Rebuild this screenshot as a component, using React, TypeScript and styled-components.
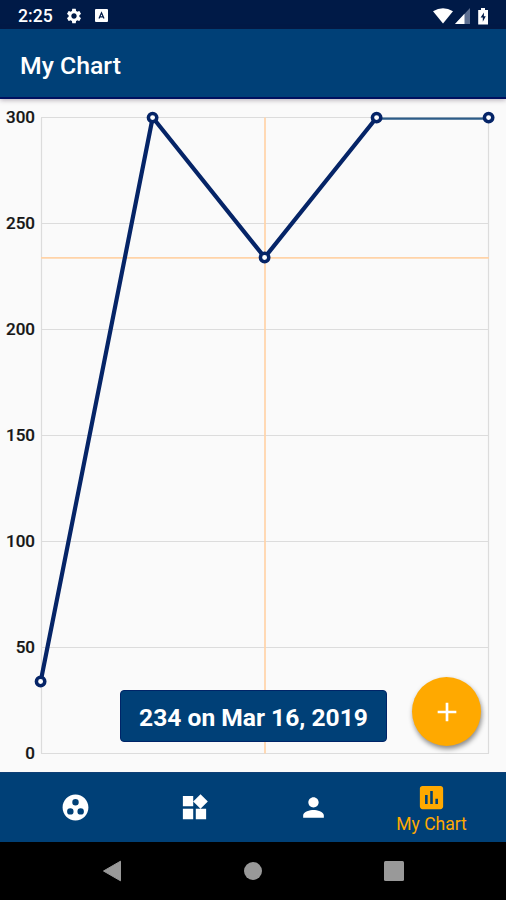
import React from 'react';
import styled, { createGlobalStyle } from 'styled-components';
import { MdAdd, MdGroupWork, MdInsertChart, MdPerson, MdSettings, MdWidgets } from 'react-icons/md';

const GlobalStyle = createGlobalStyle`
  * { box-sizing: border-box; }
  body { margin: 0; background: #000; font-family: Roboto, sans-serif; }
  svg { display: block; flex: none; }
`;

const Screen = styled.div`
  width: 506px;
  height: 900px;
  display: flex;
  flex-direction: column;
  overflow: hidden;
`;

const StatusBar = styled.div`
  height: 29px;
  flex: none;
  display: flex;
  align-items: center;
  padding: 2px 15px 0 18px;
  background: #001a47;
  color: #fff;
`;

const Clock = styled.span`
  width: 47px;
  font-size: 17.6px;
  font-weight: 500;
  line-height: 24px;
`;

const StatusNotices = styled.div`
  display: flex;
  align-items: center;
  gap: 12px;
  flex: 1;
`;

const StatusSignals = styled.div`
  display: flex;
  align-items: center;
`;

const AppBar = styled.header`
  height: 70px;
  flex: none;
  display: flex;
  align-items: center;
  padding: 5px 20px 0;
  background: #004077;
  border-bottom: 2px solid #00105f;
  box-shadow: 0 1px 5px rgba(40, 20, 50, 0.35);
  position: relative;
  z-index: 1;
`;

const Title = styled.h1`
  margin: 0;
  color: #fff;
  font-size: 24.8px;
  font-weight: 500;
  line-height: 32px;
`;

const ChartArea = styled.main`
  height: 673px;
  flex: none;
  position: relative;
  background: #fafafa;
`;

const AxisLabel = styled.text`
  font-family: Roboto, sans-serif;
  font-size: 17px;
  font-weight: 500;
  fill: #161616;
  stroke: #161616;
  stroke-width: 0.2px;
  text-anchor: end;
`;

const Tooltip = styled.div`
  position: absolute;
  left: 120px;
  top: 591px;
  width: 267px;
  height: 52px;
  display: flex;
  align-items: center;
  justify-content: center;
  padding-top: 3px;
  border: 1px solid #002468;
  border-radius: 4px;
  background: #004077;
  color: #fff;
  font-size: 24.6px;
  font-weight: 700;
  white-space: nowrap;
`;

const AddButton = styled.button`
  position: absolute;
  left: 412px;
  top: 578px;
  width: 69px;
  height: 69px;
  padding: 0;
  display: flex;
  align-items: center;
  justify-content: center;
  border: 0;
  border-radius: 50%;
  background: #ffa900;
  color: #fff;
  box-shadow: 1px 3px 5px rgba(0, 0, 0, 0.45);
`;

const TabBar = styled.nav`
  height: 70px;
  flex: none;
  display: grid;
  grid-template-columns: 119px 119px 118px 119px;
  padding-left: 16px;
  background: #004077;
  border-top: 1px solid #0e3f76;
`;

const Tab = styled.a<{ $active?: boolean }>`
  display: flex;
  flex-direction: column;
  align-items: center;
  justify-content: ${(p) => (p.$active ? 'flex-start' : 'center')};
  padding: ${(p) => (p.$active ? '9px 0 0' : '0 0 1px')};
  color: ${(p) => (p.$active ? '#ffa900' : '#fff')};
`;

const TabLabel = styled.span`
  font-size: 17.5px;
  line-height: 22px;
  white-space: nowrap;
`;

const SystemBar = styled.div`
  height: 58px;
  flex: none;
  background: #000;
  display: flex;
  align-items: center;
  justify-content: space-between;
  padding: 0 102px;
`;

const POINTS = [34, 300, 234, 300, 300];
const TICKS = [0, 50, 100, 150, 200, 250, 300];
const LEFT = 41;
const RIGHT = 489;
const xOf = (i: number) => LEFT + (i * (RIGHT - LEFT)) / 4;
const yOf = (v: number) => 654.5 - v * 2.12;

function Chart() {
  const selected = 2;
  return (
    <svg width="506" height="673" viewBox="0 0 506 673">
      {TICKS.map((t) => (
        <g key={t}>
          <line x1={LEFT} x2={RIGHT} y1={yOf(t)} y2={yOf(t)} stroke="#dcdcdc" strokeWidth="1.2" />
          <AxisLabel x="35" y={yOf(t) + 5.2}>{t}</AxisLabel>
        </g>
      ))}
      <path d="M41.5 18.5V654.5M488.5 18.5V654.5" stroke="#dcdcdc" strokeWidth="1.2" />
      <path
        d={`M${LEFT} ${yOf(234) + 0.4}H${RIGHT}M${xOf(selected)} 18.5V654.5`}
        stroke="#ffd3a8"
        strokeWidth="1.7"
      />
      <polyline
        points={POINTS.slice(0, 4).map((v, i) => `${xOf(i) - 0.3},${yOf(v)}`).join(' ')}
        fill="none"
        stroke="#052467"
        strokeWidth="4.2"
        strokeLinejoin="round"
      />
      <line x1={xOf(3)} x2={xOf(4)} y1="19.6" y2="19.6" stroke="#2d5c88" strokeWidth="2.4" />
      {POINTS.map((v, i) => (
        <circle key={i} cx={xOf(i) - 0.4} cy={yOf(v) + 0.1} r="4.2" fill="#fff" stroke="#052467" strokeWidth="3.5" />
      ))}
    </svg>
  );
}

export default function App() {
  return (
    <Screen>
      <GlobalStyle />
      <StatusBar>
        <Clock>2:25</Clock>
        <StatusNotices>
          <MdSettings size={18} />
          <svg width="13" height="13" viewBox="0 0 13 13">
            <rect width="13" height="13" rx="1" fill="#fff" />
            <path d="M4 9.5 6.5 3.7 9 9.5M5.2 7.8h2.6" fill="none" stroke="#001a47" strokeWidth="1.2" />
          </svg>
        </StatusNotices>
        <StatusSignals>
          <svg width="58" height="18" viewBox="0 0 58 18">
            <path d="M0 4.2Q10 -1.5 20 4.2L10 16.5Z" fill="#fff" />
            <path d="M37 1V17H22Z" fill="#5d6f91" />
            <path d="M31.5 6.8V17H22Z" fill="#fff" />
            <path d="M48 1h4v2h3v14.5H45.2V3H48Z" fill="#fff" />
            <path d="M51 5.4 47.6 10.5h2.2v4.2l3-5.4h-2Z" fill="#001a47" />
          </svg>
        </StatusSignals>
      </StatusBar>
      <AppBar>
        <Title>My Chart</Title>
      </AppBar>
      <ChartArea>
        <Chart />
        <Tooltip>234 on Mar 16, 2019</Tooltip>
        <AddButton aria-label="Add">
          <MdAdd size={32} />
        </AddButton>
      </ChartArea>
      <TabBar>
        <Tab><MdGroupWork size={31} /></Tab>
        <Tab><MdWidgets size={31} /></Tab>
        <Tab><MdPerson size={31} /></Tab>
        <Tab $active>
          <MdInsertChart size={31} />
          <TabLabel>My Chart</TabLabel>
        </Tab>
      </TabBar>
      <SystemBar>
        <svg width="20" height="22" viewBox="0 0 20 22">
          <path d="M1.5 11 18.5 1.2V20.8Z" fill="#999" stroke="#999" strokeLinejoin="round" />
        </svg>
        <svg width="20" height="20" viewBox="0 0 20 20">
          <circle cx="10" cy="10" r="9" fill="#999" />
        </svg>
        <svg width="20" height="20" viewBox="0 0 20 20">
          <rect width="20" height="20" rx="1.5" fill="#999" />
        </svg>
      </SystemBar>
    </Screen>
  );
}
